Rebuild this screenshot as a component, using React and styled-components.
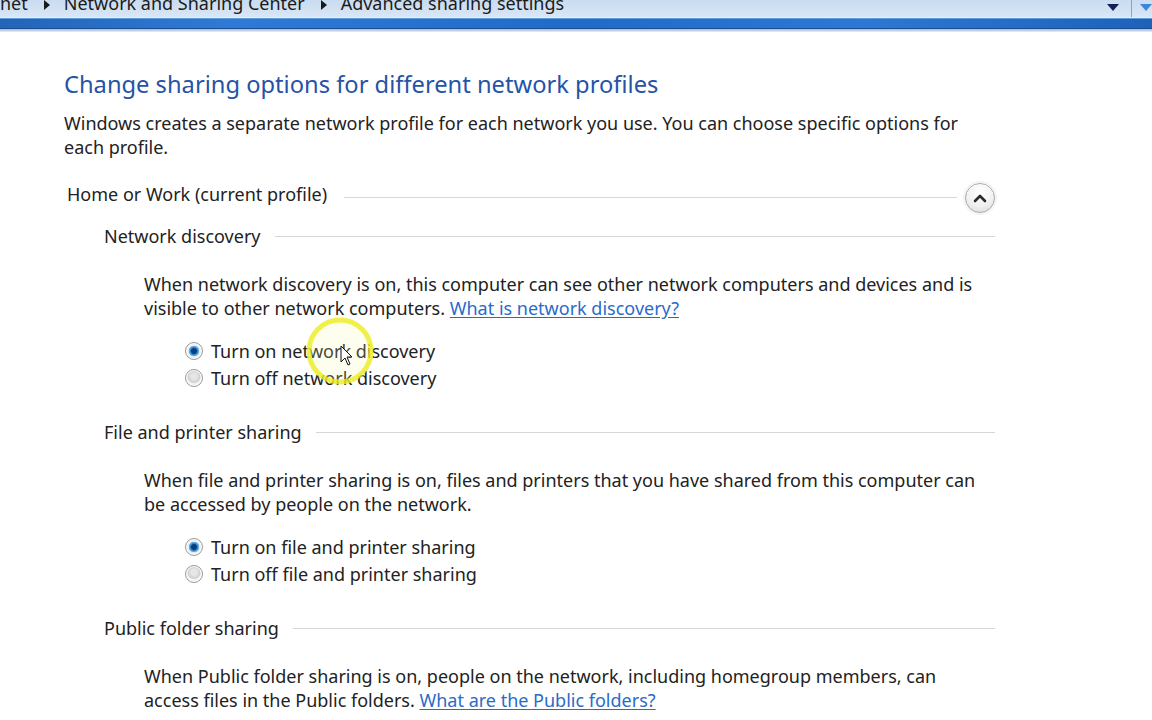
import React from "react";
import styled, { createGlobalStyle } from "styled-components";

const Global = createGlobalStyle`
  html, body { margin: 0; padding: 0; background: #fff; }
  body { width: 1152px; height: 720px; overflow: hidden; font-family: "Noto Sans", "Open Sans", sans-serif; }
`;

const Page = styled.div`
  position: relative;
  width: 1152px;
  height: 720px;
  overflow: hidden;
  background: #fff;
  display: flex;
  flex-direction: column;
`;

const AddressBar = styled.div`
  height: 17px;
  display: flex;
  align-items: flex-end;
  background: linear-gradient(#c9dcf1, #d9e6f4);
  border-bottom: 1px solid #e6eef8;
  overflow: hidden;
  position: relative;
`;

const Crumbs = styled.div`
  display: flex;
  align-items: center;
  height: 24px;
  margin-bottom: 2px;
  font-size: 18px;
  color: #1b1b1b;
  white-space: nowrap;
`;

const Crumb = styled.span`
  padding: 0;
`;

const Sep = styled.span`
  width: 0;
  height: 0;
  border-top: 5px solid transparent;
  border-bottom: 5px solid transparent;
  border-left: 6px solid #1a1a1a;
  margin: 4px 14px 0 16px;
`;

const BarRight = styled.div`
  margin-left: auto;
  display: flex;
  align-items: center;
  height: 17px;
`;

const DropTri = styled.span`
  width: 0;
  height: 0;
  border-left: 6px solid transparent;
  border-right: 6px solid transparent;
  border-top: 7px solid #13205a;
  margin-right: 12px;
  margin-top: -2px;
`;

const VDiv = styled.span`
  width: 1px;
  height: 17px;
  background: #8ea3bd;
  margin-right: 8px;
`;

const BlueTri = styled.span`
  width: 0;
  height: 0;
  border-left: 6px solid transparent;
  border-right: 6px solid transparent;
  border-top: 7px solid #3b86d6;
  margin-top: -2px;
`;

const BlueBand = styled.div`
  height: 11px;
  background: linear-gradient(90deg, #2464b8, #2f7ad4 20%, #1f6bc6 50%, #2d78d2 75%, #1e62b8);
  box-shadow: inset 0 1px 0 #5c9be0, inset 0 -1px 0 #1b4f96;
`;

const BandEdge = styled.div`
  height: 3px;
  background: linear-gradient(#9fb8d4, #e9eef4);
`;

const Content = styled.div`
  padding: 37px 0 0 64px;
  width: 931px;
  display: flex;
  flex-direction: column;
`;

const Title = styled.h1`
  margin: 0;
  font-weight: 400;
  font-size: 23.7px;
  line-height: 30px;
  color: #2453a8;
`;

const Text = styled.p`
  margin: ${(p) => p.$mt || 0}px 0 0 ${(p) => p.$ml || 0}px;
  font-size: 18px;
  line-height: 24px;
  color: #222;
  white-space: nowrap;
`;

const Link = styled.a`
  color: #2a6bc8;
  text-decoration: underline;
  text-underline-offset: 2px;
  cursor: pointer;
`;

const HeaderRow = styled.div`
  display: flex;
  align-items: center;
  margin: ${(p) => p.$mt}px 0 0 ${(p) => p.$ml}px;
  height: 24px;
`;

const HeaderLabel = styled.span`
  font-size: 18px;
  line-height: 24px;
  color: #222;
  white-space: nowrap;
`;

const Rule = styled.span`
  flex: 1;
  height: 1px;
  background: #d6d6d6;
  margin-left: ${(p) => p.$gap}px;
  margin-top: ${(p) => p.$dy || 0}px;
`;

const CollapseBtn = styled.button`
  flex: none;
  width: 30px;
  height: 30px;
  margin-left: 8px;
  margin-top: 8px;
  border-radius: 50%;
  border: 1px solid #a9a9a9;
  background: radial-gradient(circle at 50% 30%, #ffffff 0%, #f1f1f1 55%, #d9d9d9 100%);
  box-shadow: 0 0 0 2px #f4f4f4, inset 0 1px 0 #fff;
  display: flex;
  align-items: center;
  justify-content: center;
  padding: 0;
`;

const Options = styled.div`
  display: flex;
  flex-direction: column;
  margin: 17.5px 0 0 121px;
`;

const OptionRow = styled.label`
  display: flex;
  align-items: center;
  height: 27px;
  gap: 8px;
  font-size: 18px;
  color: #222;
`;

const Radio = styled.span`
  width: 18px;
  height: 18px;
  border-radius: 50%;
  box-sizing: border-box;
  border: 1px solid #9a9a9a;
  background: ${(p) =>
    p.$on
      ? "radial-gradient(circle, #0b3f7a 0 2.5px, #2a86c8 3.5px, #6fb8e8 5px, #e9eef3 5.5px, #f7f7f7 100%)"
      : "radial-gradient(circle at 50% 40%, #e6e6e6 0 3px, #cfcfcf 6px, #f2f2f2 7px)"};
  box-shadow: inset 0 0 0 1px #fff;
`;

const Overlay = styled.svg`
  position: absolute;
  left: 0;
  top: 0;
  pointer-events: none;
`;

function Section({ title, ruleGap, mt, children, options }) {
  return (
    <>
      <HeaderRow $mt={mt} $ml={40}>
        <HeaderLabel>{title}</HeaderLabel>
        <Rule $gap={ruleGap} />
      </HeaderRow>
      {children}
      {options && (
        <Options>
          {options.map((o, i) => (
            <OptionRow key={i}>
              <Radio $on={i === 0} />
              {o}
            </OptionRow>
          ))}
        </Options>
      )}
    </>
  );
}

export default function App() {
  return (
    <Page>
      <Global />
      <AddressBar>
        <Crumbs>
          <Crumb>net</Crumb>
          <Sep />
          <Crumb>Network and Sharing Center</Crumb>
          <Sep />
          <Crumb>Advanced sharing settings</Crumb>
        </Crumbs>
        <BarRight>
          <DropTri />
          <VDiv />
          <BlueTri />
        </BarRight>
      </AddressBar>
      <BlueBand />
      <BandEdge />
      <Content>
        <Title>Change sharing options for different network profiles</Title>
        <Text $mt={12}>
          Windows creates a separate network profile for each network you use. You can choose specific options for
          <br />
          each profile.
        </Text>
        <HeaderRow $mt={23} $ml={3}>
          <HeaderLabel>Home or Work (current profile)</HeaderLabel>
          <Rule $gap={17} $dy={6} />
          <CollapseBtn aria-label="collapse">
            <svg width="14" height="10" viewBox="0 0 14 10">
              <path d="M2 8 L7 3 L12 8" fill="none" stroke="#2a2a2a" strokeWidth="2.6" strokeLinecap="round" strokeLinejoin="round" />
            </svg>
          </CollapseBtn>
        </HeaderRow>

        <Section
          title="Network discovery"
          ruleGap={14}
          mt={18}
          options={["Turn on network discovery", "Turn off network discovery"]}
        >
          <Text $mt={24} $ml={80}>
            When network discovery is on, this computer can see other network computers and devices and is
            <br />
            visible to other network computers. <Link>What is network discovery?</Link>
          </Text>
        </Section>

        <Section
          title="File and printer sharing"
          ruleGap={14}
          mt={28.5}
          options={["Turn on file and printer sharing", "Turn off file and printer sharing"]}
        >
          <Text $mt={24} $ml={80}>
            When file and printer sharing is on, files and printers that you have shared from this computer can
            <br />
            be accessed by people on the network.
          </Text>
        </Section>

        <Section title="Public folder sharing" ruleGap={14} mt={28.5}>
          <Text $mt={24} $ml={80}>
            When Public folder sharing is on, people on the network, including homegroup members, can
            <br />
            access files in the Public folders. <Link>What are the Public folders?</Link>
          </Text>
        </Section>
      </Content>

      <Overlay width="1152" height="720" viewBox="0 0 1152 720">
        <circle cx="340" cy="351" r="31" fill="rgba(250,250,160,0.18)" stroke="rgba(236,236,30,0.8)" strokeWidth="5" />
        <path d="M341 346 L341 362 L345 358 L348 365 L350 364 L347 357 L352 357 Z" fill="#fff" stroke="#111" strokeWidth="1" strokeLinejoin="round" />
      </Overlay>
    </Page>
  );
}
